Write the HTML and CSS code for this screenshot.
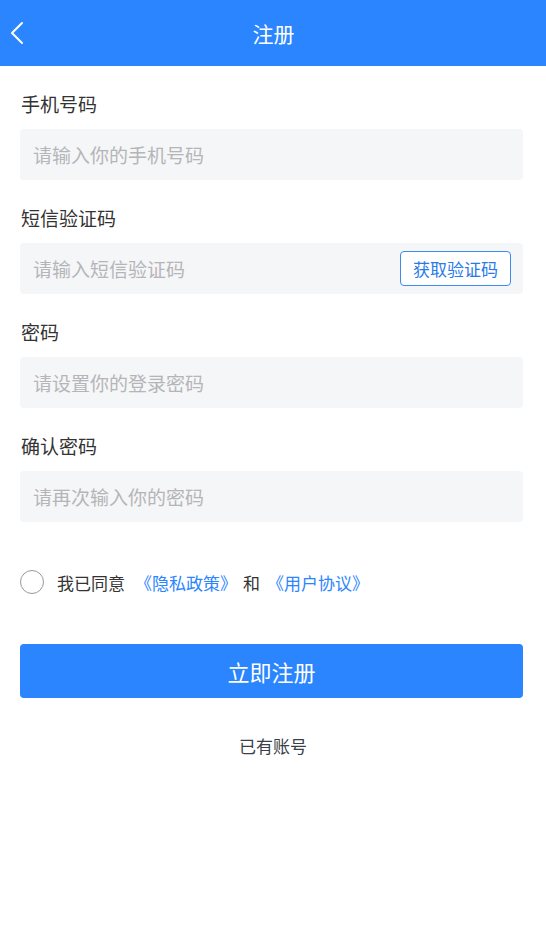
FILE: index.html
```html
<!DOCTYPE html>
<html lang="zh-CN">
<head>
    <meta charset="UTF-8">
    <meta name="viewport" content="width=device-width, initial-scale=1.0">
    <title>注册</title>
    <link rel="stylesheet" href="styles.css">
</head>
<body>
    <div class="nav-bar">
        <span class="back">
            <svg width="14" height="24" viewBox="0 0 14 24"><path d="M12 2 L2 12 L12 22" fill="none" stroke="#fff" stroke-width="2" stroke-linecap="round" stroke-linejoin="round"/></svg>
        </span>
        <div class="nav-title">注册</div>
    </div>

    <div class="form">
        <div class="field">
            <div class="label">手机号码</div>
            <div class="input-box"><span class="placeholder">请输入你的手机号码</span></div>
        </div>
        <div class="field">
            <div class="label">短信验证码</div>
            <div class="input-box">
                <span class="placeholder">请输入短信验证码</span>
                <span class="code-btn">获取验证码</span>
            </div>
        </div>
        <div class="field">
            <div class="label">密码</div>
            <div class="input-box"><span class="placeholder">请设置你的登录密码</span></div>
        </div>
        <div class="field">
            <div class="label">确认密码</div>
            <div class="input-box"><span class="placeholder">请再次输入你的密码</span></div>
        </div>

        <div class="agree">
            <span class="check"></span>
            <span class="agree-text">我已同意</span>
            <span class="link">《隐私政策》</span>
            <span class="and">和</span>
            <span class="link">《用户协议》</span>
        </div>

        <div class="submit">立即注册</div>
        <div class="login-link">已有账号</div>
    </div>
</body>
</html>
```

FILE: styles.css
```css
body {
    margin: 0;
    background-color: #fff;
    font-family: "Noto Sans CJK SC", "Noto Sans", sans-serif;
    color: #333;
}
.nav-bar {
    height: 66px;
    background-color: #2a85ff;
    display: flex;
    align-items: center;
    justify-content: center;
    position: relative;
}
.back {
    position: absolute;
    left: 10px;
    top: 21px;
    display: flex;
}
.nav-title {
    color: #fff;
    font-size: 21px;
    padding-left: 1px;
}
.form {
    padding: 0 23px 0 20px;
}
.field {
    padding-top: 24px;
}
.label {
    font-size: 19px;
    line-height: 28px;
    padding-left: 1px;
    margin-bottom: 11px;
}
.input-box {
    height: 51px;
    background-color: #f5f6f8;
    border-radius: 4px;
    display: flex;
    align-items: center;
    justify-content: space-between;
    padding: 0 12px 0 13px;
}
.placeholder {
    color: #b5b5b8;
    font-size: 19px;
}
.code-btn {
    border: 1px solid #3d8bf2;
    border-radius: 4px;
    color: #2a7ae8;
    font-size: 17px;
    height: 33px;
    line-height: 33px;
    padding: 0 12px;
    background-color: #fff;
}
.agree {
    display: flex;
    align-items: center;
    margin-top: 48px;
    font-size: 17px;
    height: 24px;
}
.check {
    width: 22px;
    height: 22px;
    border: 1.5px solid #999;
    border-radius: 50%;
    margin-right: 13px;
}
.agree-text {
    margin-right: 10px;
}
.and {
    margin: 0 7px 0 6px;
}
.link {
    color: #2a85ff;
}
.submit {
    margin-top: 50px;
    height: 54px;
    background-color: #2a85ff;
    border-radius: 4px;
    color: #fff;
    font-size: 22px;
    display: flex;
    align-items: center;
    justify-content: center;
}
.login-link {
    text-align: center;
    margin-top: 35px;
    font-size: 17px;
    color: #3a3f4a;
    padding-left: 3px;
}
```
